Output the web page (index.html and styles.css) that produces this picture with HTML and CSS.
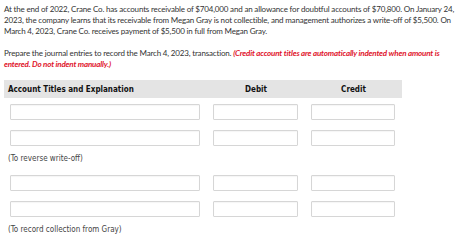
FILE: index.html
```html
<!DOCTYPE html>
<html lang="en">
<head>
  <meta charset="UTF-8">
  <title>Journal Entry</title>
  <link rel="stylesheet" href="styles.css">
</head>
<body>

<div class="question">
  <p>At the end of 2022, Crane Co. has accounts receivable of $704,000 and an allowance for doubtful accounts of $70,800. On January 24, 2023, the company learns that its receivable from Megan Gray is not collectible, and management authorizes a write-off of $5,500. On March 4, 2023, Crane Co. receives payment of $5,500 in full from Megan Gray.</p>
  <p class="instr">Prepare the journal entries to record the March 4, 2023, transaction. <span class="note">(Credit account titles are automatically indented when amount is entered. Do not indent manually.)</span></p>
</div>

<div class="journal">
  <div class="head">
    <div class="col-title">Account Titles and Explanation</div>
    <div class="col-amt">Debit</div>
    <div class="col-amt">Credit</div>
  </div>

  <!-- entry 1 -->
  <div class="row">
    <input type="text" class="acct">
    <input type="text" class="amt">
    <input type="text" class="amt">
  </div>
  <div class="row">
    <input type="text" class="acct">
    <input type="text" class="amt">
    <input type="text" class="amt">
  </div>
  <div class="explain">(To reverse write-off)</div>

  <!-- entry 2 -->
  <div class="row">
    <input type="text" class="acct">
    <input type="text" class="amt">
    <input type="text" class="amt">
  </div>
  <div class="row">
    <input type="text" class="acct">
    <input type="text" class="amt">
    <input type="text" class="amt">
  </div>
  <div class="explain">(To record collection from Gray)</div>
</div>

</body>
</html>
```

FILE: styles.css
```css
body {
  margin: 0;
  padding: 0;
  background: #fff;
}

.question {
  font-family: Lato, sans-serif;
  font-size: 8px;
  letter-spacing: -0.17px;
  line-height: 11px;
  color: #333;
  padding: 4px 4px 0;
}

.question p {
  margin: 0 0 11px;
}

.question .instr {
  max-width: 452px;
}

.note {
  color: #e0142c;
  font-weight: 700;
  font-style: italic;
}

.journal {
  width: 398px;
  margin: -1px 0 0 4px;
  font-family: "DejaVu Sans Condensed", "DejaVu Sans", sans-serif;
  font-size: 8px;
  color: #333;
}

.head {
  display: grid;
  grid-template-columns: 203px 98px 97px;
  height: 18px;
  align-items: center;
  background: #e4e4e4;
  font-weight: 700;
  color: #111;
}

.col-title {
  padding-left: 4px;
}

.col-amt {
  text-align: center;
}

.row {
  display: grid;
  grid-template-columns: 190px 85px 84px;
  column-gap: 13px;
  padding-left: 6px;
  margin-top: 10px;
}

.head + .row {
  margin-top: 6px;
}

.row input {
  box-sizing: border-box;
  width: 100%;
  height: 16px;
  margin: 0;
  padding: 0 3px;
  border: 1px solid #d6d6d6;
  border-radius: 1px;
  background: #fff;
  box-shadow: inset 0 1px 1px rgba(0,0,0,0.04);
}

.explain {
  padding: 8px 0 1px 4px;
  line-height: 10px;
  color: #444;
}
```
